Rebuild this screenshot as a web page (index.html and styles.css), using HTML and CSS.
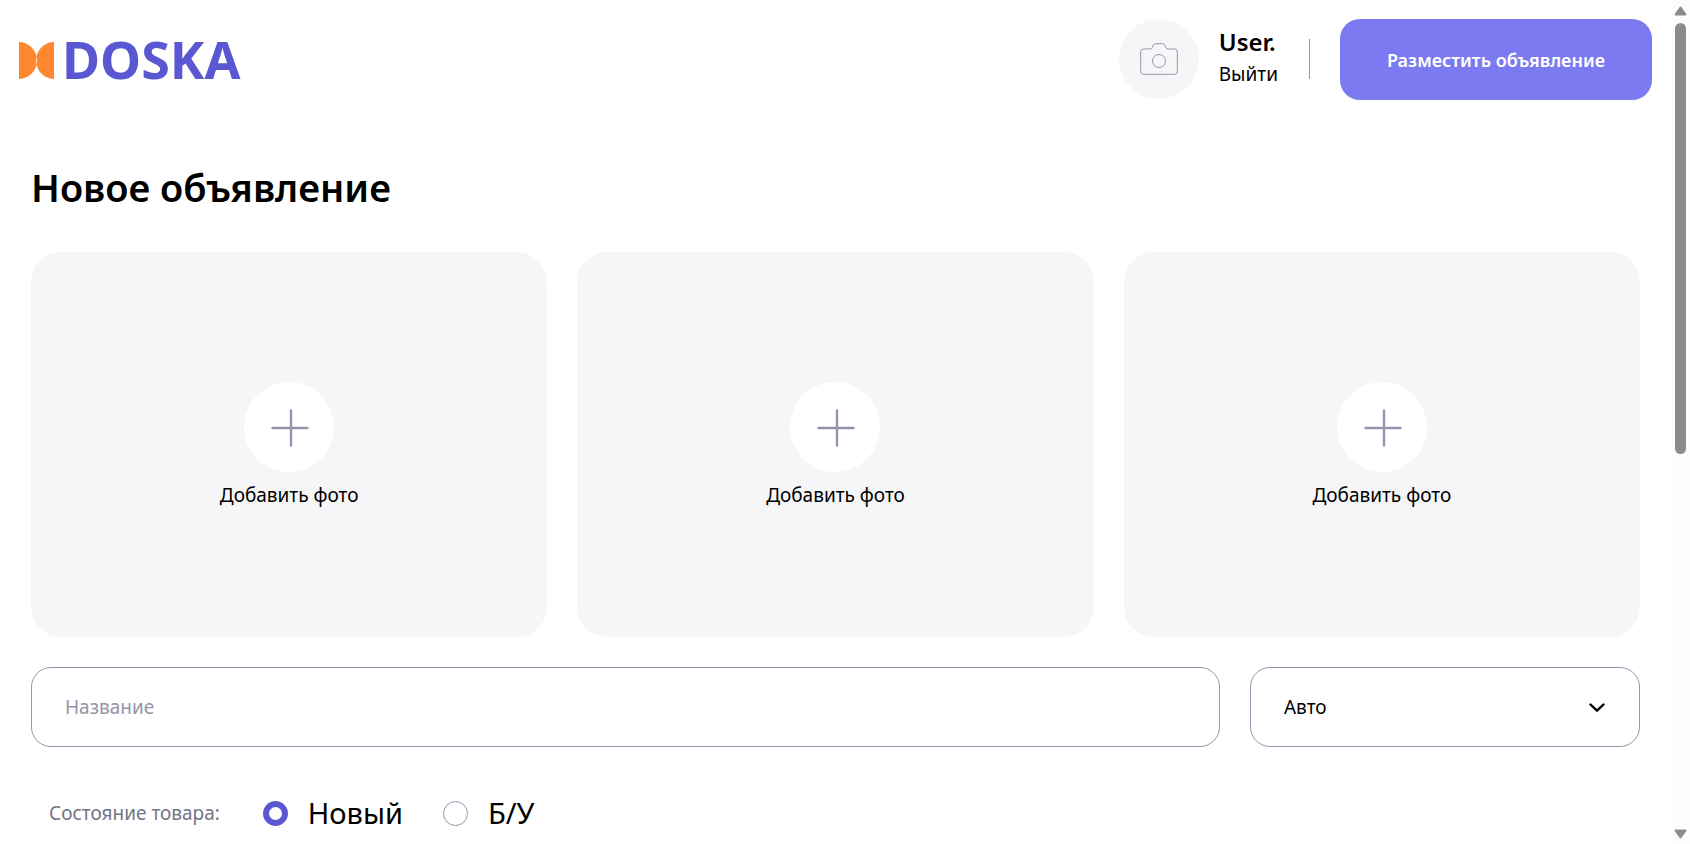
FILE: index.html
```html
<!DOCTYPE html>
<html lang="ru">
<head>
<meta charset="utf-8">
<title>DOSKA — Новое объявление</title>
<link rel="stylesheet" href="styles.css">
</head>
<body>
<div class="page">
  <header class="header">
    <a class="logo" href="#" aria-label="DOSKA">
      <svg class="logo-mark" viewBox="0 0 35 37" aria-hidden="true">
        <path d="M0 0A18 18.500 0 0 1 0 37ZM35 0A18 18.500 0 0 0 35 37Z"/>
      </svg>
      <span class="logo-text">DOSKA</span>
    </a>
    <div class="account">
      <div class="avatar">
        <svg class="camera" viewBox="0 0 38 32" aria-hidden="true">
          <path d="M3.5 6H10Q11.5 6 12.2 4.5L13.3 2Q14 .7 15.5 .7H22.5Q24 .7 24.7 2L25.8 4.5Q26.500 6 28 6H34.500Q37.300 6 37.300 8.800V28.500Q37.300 31.300 34.500 31.300H3.500Q.7 31.300 .7 28.500V8.800Q.7 6 3.500 6Z"/>
          <circle cx="19" cy="18" r="6.500"/>
        </svg>
      </div>
      <div class="account-text">
        <span class="account-name">User.</span>
        <a class="account-exit" href="#">Выйти</a>
      </div>
      <span class="divider"></span>
      <button class="post-button" type="button">Разместить объявление</button>
    </div>
  </header>
  <main class="content">
    <h1 class="title">Новое объявление</h1>
    <form class="form">
      <div class="photos">
        <button class="photo" type="button">
          <span class="photo-circle"><svg class="plus" viewBox="0 0 40 40" aria-hidden="true"><path d="M3.500 21H38.500M22 3.500V38.500"/></svg></span>
          <span>Добавить фото</span>
        </button>
        <button class="photo" type="button">
          <span class="photo-circle"><svg class="plus" viewBox="0 0 40 40" aria-hidden="true"><path d="M3.500 21H38.500M22 3.500V38.500"/></svg></span>
          <span>Добавить фото</span>
        </button>
        <button class="photo" type="button">
          <span class="photo-circle"><svg class="plus" viewBox="0 0 40 40" aria-hidden="true"><path d="M3.500 21H38.500M22 3.500V38.500"/></svg></span>
          <span>Добавить фото</span>
        </button>
      </div>
      <div class="fields">
        <input class="field name" type="text" placeholder="Название" aria-label="Название">
        <div class="select-wrap">
          <select class="field select" aria-label="Категория"><option>Авто</option></select>
          <svg class="chevron" viewBox="0 0 16 10" aria-hidden="true"><path d="M1.500 1.500L8 7.700L14.500 1.500"/></svg>
        </div>
      </div>
      <div class="condition" role="radiogroup" aria-labelledby="condition-label">
        <span class="condition-label" id="condition-label">Состояние товара:</span>
        <label class="option"><input class="radio" type="radio" name="condition" checked>Новый</label>
        <label class="option"><input class="radio" type="radio" name="condition">Б/У</label>
      </div>
    </form>
  </main>
</div>
<div class="scrollbar" aria-hidden="true">
  <svg class="arrow" viewBox="0 0 13 10"><path d="M6.500 1.500L11.500 8.500H1.500Z"/></svg>
  <div class="track"><div class="thumb"></div></div>
  <svg class="arrow" viewBox="0 0 13 10"><path d="M1.500 1.500H11.500L6.500 8.500Z"/></svg>
</div>
</body>
</html>
```
FILE: styles.css
```css
* {
  box-sizing: border-box;
}

body {
  display: flex;
  height: 100vh;
  margin: 0;
  overflow: hidden;
  background: #fff;
  color: #000;
  font: 400 19px/26px "Noto Sans", sans-serif;
}

button,
input,
select {
  margin: 0;
  color: inherit;
  font: inherit;
}

a {
  color: inherit;
  text-decoration: none;
}

.page {
  flex: 1;
  min-width: 0;
}

.header {
  display: flex;
  align-items: flex-start;
  justify-content: space-between;
  padding: 19px 19px 0;
}

.logo {
  display: flex;
  align-items: baseline;
  gap: 8px;
}

.logo-mark {
  width: 35px;
  height: 37px;
  fill: #ff872f;
}

.logo-text {
  color: #5a57d2;
  font-size: 52px;
  font-weight: 700;
  line-height: 80px;
}

.account {
  display: flex;
  align-items: flex-start;
}

.avatar {
  display: flex;
  align-items: center;
  justify-content: center;
  width: 80px;
  height: 80px;
  border-radius: 50%;
  background: #f6f6f9;
}

.camera {
  width: 38px;
  height: 32px;
  fill: none;
  stroke: #9694ab;
}

.account-text {
  display: flex;
  flex-direction: column;
  margin: 0 31px 0 20px;
  padding-top: 7px;
  line-height: 32px;
}

.account-name {
  font-size: 24px;
  font-weight: 600;
}

.divider {
  width: 1px;
  height: 40px;
  margin: 20px 30px 0 0;
  background: #9694ab;
}

.post-button {
  height: 81px;
  padding: 0 47px;
  border: 0;
  border-radius: 20px;
  background: #7c7af0;
  color: #fff;
  font-size: 18px;
  font-weight: 600;
}

.content {
  padding: 60px 31px 0;
}

.title {
  margin: 0 0 38px;
  font-size: 38px;
  font-weight: 600;
  line-height: 54px;
}

.photos {
  display: grid;
  grid-template-columns: repeat(3, 1fr);
  gap: 30px;
}

.photo {
  display: flex;
  flex-direction: column;
  align-items: center;
  justify-content: center;
  gap: 10px;
  height: 385px;
  padding: 0;
  border: 0;
  border-radius: 30px;
  background: #f6f6f9;
}

.photo-circle {
  display: flex;
  align-items: center;
  justify-content: center;
  width: 90px;
  height: 90px;
  border-radius: 50%;
  background: #fff;
}

.plus {
  width: 40px;
  height: 40px;
  fill: none;
  stroke: #9694ab;
  stroke-width: 2.4;
  stroke-linecap: round;
}

.fields {
  display: flex;
  gap: 30px;
  margin-top: 30px;
}

.field {
  width: 100%;
  height: 80px;
  padding: 0 33px;
  border: 1px solid #9694ab;
  border-radius: 20px;
  background: #fff;
}

.name {
  flex: 1;
  min-width: 0;
}

.name::placeholder {
  color: #9694ab;
  opacity: 1;
}

.select-wrap {
  position: relative;
  width: 390px;
}

.select {
  appearance: none;
}

.chevron {
  position: absolute;
  top: 36px;
  right: 35px;
  width: 16px;
  height: 10px;
  fill: none;
  stroke: #000;
  stroke-width: 2.4;
  stroke-linecap: round;
  stroke-linejoin: round;
  pointer-events: none;
}

.condition {
  display: flex;
  align-items: center;
  gap: 40px;
  margin-top: 46px;
  padding-left: 18px;
}

.condition-label {
  padding-right: 3px;
  color: #757483;
}

.option {
  display: flex;
  align-items: center;
  gap: 20px;
  font-size: 29px;
  line-height: 40px;
}

.radio {
  appearance: none;
  width: 25px;
  height: 25px;
  margin: 0;
  border: 1px solid #9694ab;
  border-radius: 50%;
  background: #fff;
}

.radio:checked {
  border: 6px solid #5a57d2;
}

.scrollbar {
  display: flex;
  flex-direction: column;
  align-items: center;
  gap: 7px;
  width: 19px;
  padding: 6px 0 5px;
  background: #fcfcfc;
}

.arrow {
  width: 13px;
  height: 10px;
  fill: #8b8b8b;
  stroke: #8b8b8b;
  stroke-width: 2;
  stroke-linejoin: round;
}

.track {
  flex: 1;
  width: 11px;
}

.thumb {
  height: 54%;
  border-radius: 6px;
  background: #8b8b8b;
}
```
